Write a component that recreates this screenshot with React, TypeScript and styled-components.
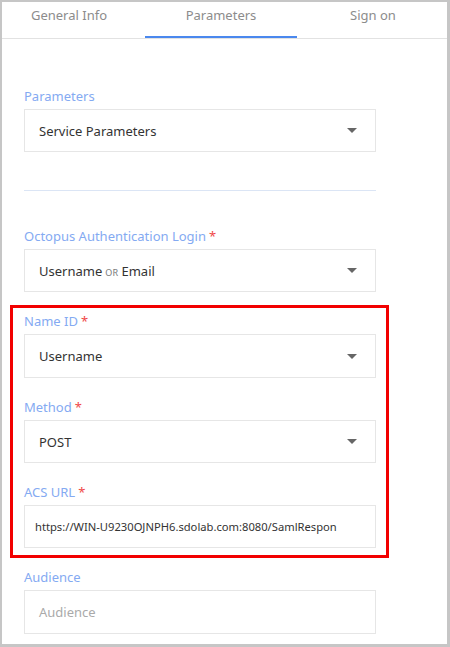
import React from "react";
import styled, { createGlobalStyle } from "styled-components";

const GlobalStyle = createGlobalStyle`
  html, body {
    margin: 0;
    padding: 0;
    background: #ffffff;
  }
  body {
    font-family: "Noto Sans", "Open Sans", Arial, sans-serif;
  }
  * { box-sizing: border-box; }
`;

const Frame = styled.div`
  width: 450px;
  height: 647px;
  border-style: solid;
  border-color: #c6c6c6;
  border-width: 2px 3px 3px 2px;
  background: #ffffff;
  overflow: hidden;
  display: flex;
  flex-direction: column;
`;

const TabBar = styled.div`
  height: 37px;
  border-bottom: 1px solid #e2e2e2;
  overflow: hidden;
  flex-shrink: 0;
`;

const TabRow = styled.div`
  display: grid;
  grid-template-columns: repeat(3, 152px);
  margin-left: -9px;
  height: 100%;
`;

const Tab = styled.div<{ $active?: boolean }>`
  display: flex;
  align-items: flex-start;
  justify-content: center;
  padding-top: 4px;
  font-size: 13px;
  color: #8c8c8c;
  border-bottom: 2px solid ${(p) => (p.$active ? "#4a88ee" : "transparent")};
`;

const Body = styled.div`
  padding: 48px 0 0 22px;
  width: 374px;
  display: flex;
  flex-direction: column;
`;

const Field = styled.div`
  display: flex;
  flex-direction: column;
  width: 352px;
`;

const Label = styled.div`
  height: 18px;
  line-height: 18px;
  margin-bottom: 4px;
  font-size: 13px;
  color: #84aaf2;
`;

const Required = styled.span`
  color: #f04848;
  margin-left: 3px;
`;

const Box = styled.div<{ $h?: number }>`
  height: ${(p) => p.$h ?? 44}px;
  border: 1px solid #e6e6e6;
  display: flex;
  align-items: center;
  justify-content: space-between;
  padding: 0 18px 0 14px;
  font-size: 13px;
  color: #333333;
`;

const UrlText = styled.span`
  font-size: 11.2px;
  color: #333333;
  margin-left: -4px;
  white-space: nowrap;
  overflow: hidden;
`;

const Placeholder = styled.span`
  color: #aaaaaa;
`;

const SmallCaps = styled.span`
  font-size: 9px;
  color: #7a7a7a;
  letter-spacing: 0.3px;
  margin: 0 3px;
`;

const Caret = styled.span`
  width: 0;
  height: 0;
  border-left: 5px solid transparent;
  border-right: 5px solid transparent;
  border-top: 5px solid #666666;
`;

const Divider = styled.div`
  width: 352px;
  height: 1px;
  background: #dbe5f5;
  margin: 38px 0 36px;
`;

const Highlight = styled.div`
  margin: 13px 0 0 -14px;
  width: 379px;
  border: 3px solid #f20000;
  padding: 4px 0 7px 11px;
  display: flex;
  flex-direction: column;
  gap: 20px;
`;

const After = styled.div`
  margin-top: 10px;
`;

type SelectProps = { children: React.ReactNode; h?: number };

const Select = ({ children, h }: SelectProps) => (
  <Box $h={h}>
    <span>{children}</span>
    <Caret />
  </Box>
);

export default function App() {
  return (
    <>
      <GlobalStyle />
      <Frame>
        <TabBar>
          <TabRow>
            <Tab>General Info</Tab>
            <Tab $active>Parameters</Tab>
            <Tab>Sign on</Tab>
          </TabRow>
        </TabBar>
        <Body>
          <Field>
            <Label>Parameters</Label>
            <Select h={43}>Service Parameters</Select>
          </Field>
          <Divider />
          <Field>
            <Label>
              Octopus Authentication Login<Required>*</Required>
            </Label>
            <Select h={43}>
              Username<SmallCaps>OR</SmallCaps>Email
            </Select>
          </Field>
          <Highlight>
            <Field>
              <Label>
                Name ID<Required>*</Required>
              </Label>
              <Select>Username</Select>
            </Field>
            <Field>
              <Label>
                Method<Required>*</Required>
              </Label>
              <Select h={43}>POST</Select>
            </Field>
            <Field>
              <Label>
                ACS URL<Required>*</Required>
              </Label>
              <Box $h={43}>
                <UrlText>https://WIN-U9230OJNPH6.sdolab.com:8080/SamlRespon</UrlText>
              </Box>
            </Field>
          </Highlight>
          <After>
            <Field>
              <Label>Audience</Label>
              <Box>
                <Placeholder>Audience</Placeholder>
              </Box>
            </Field>
          </After>
        </Body>
      </Frame>
    </>
  );
}
